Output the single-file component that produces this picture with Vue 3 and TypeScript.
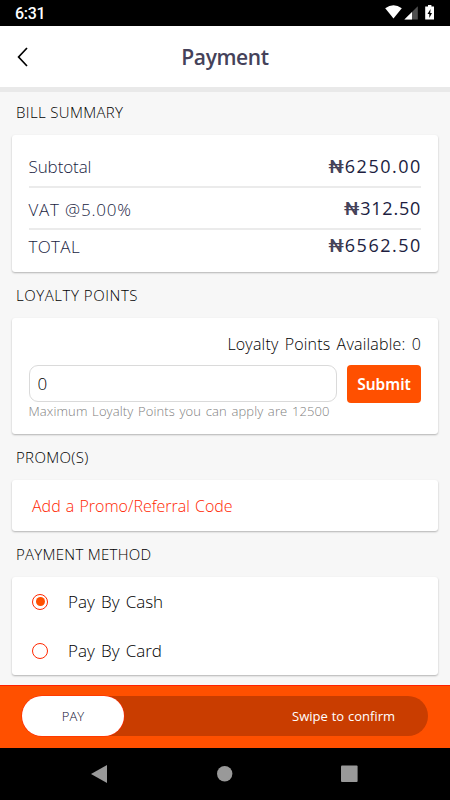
<script setup lang="ts">
import { ref } from 'vue'

interface BillLine { label: string; amount: string; cls: string }

const bill: BillLine[] = [
  { label: 'Subtotal', amount: '6250.00', cls: 'subtotal' },
  { label: 'VAT @5.00%', amount: '312.50', cls: 'vat' },
  { label: 'TOTAL', amount: '6562.50', cls: 'total' },
]
const methods: string[] = ['Pay By Cash', 'Pay By Card']
const selected = ref<string>('Pay By Cash')
const points = ref<string>('0')
</script>

<template>
  <div class="screen">
    <div class="status">
      <span class="clock">6:31</span>
      <svg class="status-icons" width="50" height="16" viewBox="0 0 50 16">
        <path d="M0.2 3.2Q8.5-2.6 16.8 3.2L8.5 13.6Z" fill="#fff" />
        <path d="M32.8 1.2V14.5H19.4Z" fill="#505050" />
        <path d="M27 7V14.5H19.4Z" fill="#fff" />
        <path d="M43 0h3.4v1.6H49V14.6H40.2V1.6H43Z" fill="#fff" />
        <path d="M45.6 4L42.5 9h1.8v4L47 7.9h-1.8Z" fill="#000" />
      </svg>
    </div>
    <header class="header">
      <svg class="back" width="12" height="20" viewBox="0 0 12 20"><path d="M10 1L1.6 10L10 19" fill="none" stroke="#000" stroke-width="1.7" /></svg>
      <h1>Payment</h1>
    </header>

    <main class="content">
      <h2 class="h-bill">BILL SUMMARY</h2>
      <section class="card bill">
        <div v-for="line in bill" :key="line.label" class="line" :class="line.cls">
          <span class="label">{{ line.label }}</span>
          <span class="amount"><span class="naira">₦</span><span class="digits">{{ line.amount }}</span></span>
        </div>
      </section>

      <h2 class="h-loyalty">LOYALTY POINTS</h2>
      <section class="card loyalty">
        <div class="available">Loyalty Points Available: 0</div>
        <div class="apply">
          <input v-model="points" class="field" type="text" />
          <button class="submit">Submit</button>
        </div>
        <div class="hint">Maximum Loyalty Points you can apply are 12500</div>
      </section>

      <h2 class="h-promo">PROMO(S)</h2>
      <section class="card promo">Add a Promo/Referral Code</section>

      <h2 class="h-method">PAYMENT METHOD</h2>
      <section class="card methods">
        <div v-for="m in methods" :key="m" class="method" @click="selected = m">
          <span class="radio" :class="{ on: selected === m }"></span>
          <span class="method-name">{{ m }}</span>
        </div>
      </section>
    </main>

    <footer class="footer">
      <div class="track">
        <div class="thumb">PAY</div>
        <span class="swipe">Swipe to confirm</span>
      </div>
    </footer>
    <nav class="nav">
      <svg width="450" height="52" viewBox="0 0 450 52">
        <path d="M91 26L107 17V35Z" fill="#999" />
        <circle cx="224.7" cy="25.7" r="7.7" fill="#999" />
        <rect x="341" y="17.4" width="16.6" height="16.6" rx="1" fill="#999" />
      </svg>
    </nav>
  </div>
</template>

<style>
body { margin: 0; background: #f7f7f7; }
</style>

<style scoped>
* { box-sizing: border-box; }
.screen { width: 450px; height: 800px; display: flex; flex-direction: column; overflow: hidden; background: #f7f7f7; font-family: "Open Sans", "Noto Sans", sans-serif; font-weight: 300; color: #000; white-space: nowrap; }
.status { height: 26px; flex: none; background: #000; display: flex; justify-content: space-between; align-items: center; padding: 0 15px; }
.clock { color: #fff; font: 500 16px/20px Roboto, sans-serif; letter-spacing: -.3px; padding-top: 2px; }
.status-icons { display: block; margin-top: -1px; }
.header { height: 66px; flex: none; background: #fff; border-bottom: 5px solid #e9e9e9; display: grid; grid-template-columns: 60px 1fr 60px; align-items: center; }
.back { margin-left: 17px; }
h1 { margin: 0; text-align: center; font: 600 21px/30px "Open Sans", sans-serif; letter-spacing: -.4px; color: #45425a; }
.content { height: 593px; flex: none; padding: 0 12px; display: flex; flex-direction: column; }
h2 { margin: 0; padding-left: 4px; font-size: 15px; font-weight: 300; line-height: 20px; letter-spacing: .35px; color: #000; }
.h-bill { margin: 10px 0 13px; }
.h-loyalty { margin: 13px 0 13px; letter-spacing: .55px; }
.h-promo { margin: 13px 0 13px; }
.h-method { margin: 13px 0 13px; letter-spacing: .28px; }
.card { flex: none; background: #fff; border-radius: 3px; box-shadow: 0 1px 2px rgba(0, 0, 0, .28); }
.bill { height: 137px; padding: 13px 17px 0 16.5px; color: #201d3f; }
.line { display: flex; justify-content: space-between; align-items: center; font-size: 17px; border-bottom: 2px solid #ebebeb; }
.subtotal { height: 40px; }
.vat { height: 42px; padding-top: 3px; }
.total { height: 33px; border-bottom: 0; }
.label { padding-bottom: 1px; }
.subtotal .label { letter-spacing: -.1px; }
.vat .label { letter-spacing: .8px; }
.total .label { letter-spacing: .35px; }
.amount { display: flex; align-items: baseline; font-size: 18px; font-weight: 400; line-height: 24px; padding-bottom: 2px; }
.digits { letter-spacing: 1.5px; margin-right: -.8px; }
.vat .digits { letter-spacing: .8px; margin-right: -.2px; }
.naira { font-family: Roboto, sans-serif; font-size: 19px; font-weight: 500; color: #454259; margin-right: 1px; }
.loyalty { height: 116px; padding: 15px 17px 0 16.5px; }
.available { text-align: right; font-size: 16px; line-height: 22px; letter-spacing: .2px; word-spacing: 1.8px; }
.apply { display: flex; justify-content: space-between; margin-top: 10px; }
.field { width: 308px; height: 37px; border: 1.5px solid #dadada; border-radius: 9px; padding: 0 8px; font: 300 17px "Open Sans", sans-serif; color: #000; background: #fff; outline: 0; }
.submit { width: 74px; height: 38px; border: 0; border-radius: 4px; padding: 0; background: #ff5000; color: #fff; font: 600 15.5px "Noto Sans", sans-serif; }
.hint { font-size: 13px; line-height: 16px; letter-spacing: .12px; word-spacing: 1.1px; color: #808080; }
.promo { height: 51px; padding-left: 20px; display: flex; align-items: center; font-size: 16px; word-spacing: 1px; color: #ff1e00; }
.methods { height: 98px; display: grid; grid-template-rows: 49px 49px; }
.method { display: flex; align-items: center; gap: 20px; padding-left: 20px; font-size: 17px; word-spacing: 1.8px; }
.radio { width: 16px; height: 16px; border: 1.5px solid #ff2800; border-radius: 50%; display: grid; place-items: center; }
.radio.on::after { content: ""; width: 9px; height: 9px; border-radius: 50%; background: #ff5000; }
.footer { height: 63px; flex: none; background: #ff5000; border-top: 1px solid #ff2000; padding: 10px 22px; }
.track { height: 40px; border-radius: 20px; background: #c93d00; display: flex; align-items: center; justify-content: space-between; padding-right: 33px; }
.thumb { width: 102px; height: 40px; border-radius: 20px; background: #fff; box-shadow: 0 0 0 .6px #ff2400; display: grid; place-items: center; font-size: 13px; color: #100d30; }
.swipe { font-size: 13px; font-weight: 500; word-spacing: .5px; color: #fff; }
.nav { height: 52px; flex: none; background: #000; }
.nav svg { display: block; }
</style>
